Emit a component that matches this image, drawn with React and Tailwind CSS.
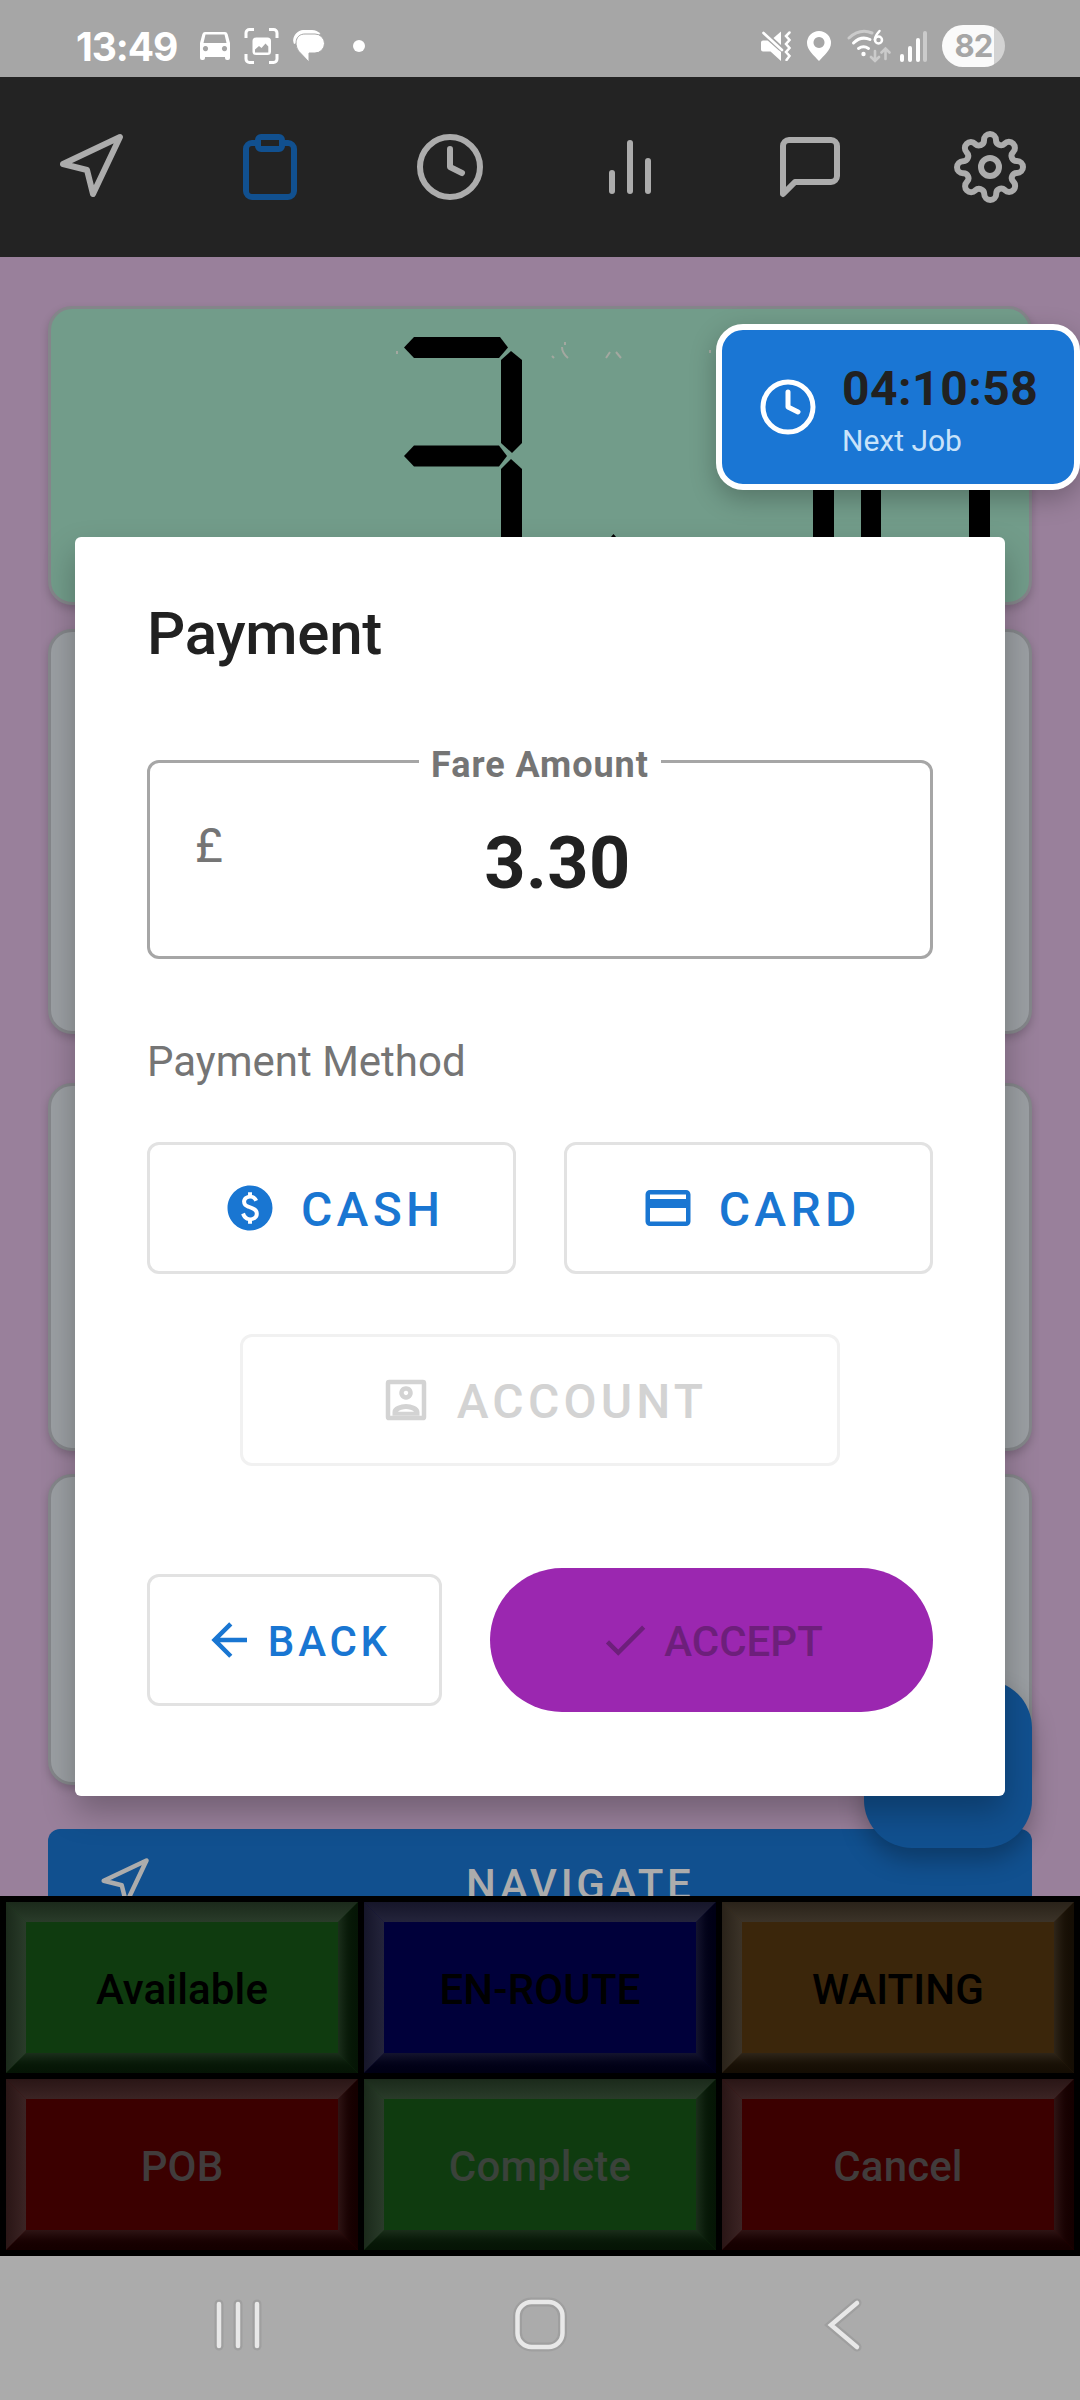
import React from "react";
import {
  FiNavigation,
  FiClipboard,
  FiClock,
  FiBarChart2,
  FiMessageSquare,
  FiSettings,
} from "react-icons/fi";
import { MdPaid, MdCreditCard } from "react-icons/md";

function StatusBar() {
  return (
    <div className="flex h-[77px] items-center bg-[#a6a6a6] pt-[15px] pr-[75px] pl-[76px] text-white">
      <span className="w-[103px] font-['Inter'] text-[39px] leading-none font-bold tracking-[-1.100px] whitespace-nowrap">
        13:49
      </span>
      <svg className="ml-[21px] h-[28px] w-[30px]" viewBox="0 0 30 28" fill="currentColor">
        <path
          fillRule="evenodd"
          d="M5 0h20q2 0 2.600 2L30 11v15q0 2-2 2h-1q-2 0-2-2v-1H5v1q0 2-2 2H2q-2 0-2-2V11L2.400 2Q3 0 5 0zM5.500 2.500L3.500 11h23l-2-8.500zM5.500 14a2.600 2.600 0 1 0 .01 0zM24.500 14a2.600 2.600 0 1 0 .01 0z"
        />
      </svg>
      <svg className="ml-[14px] h-[36px] w-[36px]" viewBox="0 0 36 36">
        <path
          d="M2 10V5a3.500 3.500 0 0 1 3.500-3.500H10M25 1.500h4.500A3.500 3.500 0 0 1 33 5v5M33 26v5a3.500 3.500 0 0 1-3.500 3.500H25M10 34.500H5.500A3.500 3.500 0 0 1 2 31v-5"
          fill="none"
          stroke="currentColor"
          strokeWidth="3"
        />
        <rect x="8.500" y="9.500" width="18.500" height="17.500" rx="3.500" fill="currentColor" />
        <path d="M11 24.500v-3l4-3.500 2.500 2 4-4.500 2.800 3v6z" fill="#a6a6a6" />
      </svg>
      <svg className="ml-[13px] h-[32px] w-[32px]" viewBox="0 0 32 32" fill="currentColor">
        <path d="M1 14C-2 7 4 .500 10 0h9q5 0 8.500 4z" />
        <path d="M12 4h10a9.500 9.500 0 0 1 0 19h-6v9L6 21.500C1 15 2 4 12 4z" stroke="#a6a6a6" strokeWidth="1" />
      </svg>
      <span className="ml-[28px] h-[12px] w-[12px] rounded-full bg-white" />

      <div className="ml-auto flex items-center">
        <svg className="h-[30px] w-[30px]" viewBox="0 0 30 30" fill="currentColor">
          <path d="M12.500 7L20 .500V14z" />
          <path d="M2 9.500h4.500l.500-.500 13 12v9L9.500 20.500H2q-2 0-2-2v-7q0-2 2-2z" />
          <path d="M2.500 2.500L20 18" stroke="#a6a6a6" strokeWidth="5" fill="none" />
          <path d="M2.500 2L21 19" stroke="currentColor" strokeWidth="2.600" fill="none" strokeLinecap="round" />
          <path
            d="M28.500 1.500l-3.500 3.500 3.500 4-3.500 4 3.500 4-3.500 4 3.500 4-3 4"
            stroke="currentColor"
            strokeWidth="2.500"
            fill="none"
            strokeLinecap="round"
          />
        </svg>
        <svg className="ml-[16px] h-[30px] w-[24px]" viewBox="0 0 24 30" fill="currentColor">
          <path
            fillRule="evenodd"
            d="M12 0a12 12 0 0 1 12 12c0 7-7 12.500-12 18C7 24.500 0 19 0 12A12 12 0 0 1 12 0zm0 6a5.500 5.500 0 1 0 .01 0z"
          />
        </svg>
        <svg className="ml-[16px] h-[34px] w-[44px]" viewBox="0 0 44 34" fill="none" strokeLinecap="round">
          <path d="M2 9Q13-1 25 4" stroke="#cbcbcb" strokeWidth="3" />
          <path d="M6.500 14Q14 6.500 23 10.500" stroke="#fff" strokeWidth="3" />
          <path d="M11.500 19.500q5-3.500 10 0" stroke="#fff" strokeWidth="3" />
          <circle cx="16.500" cy="25" r="2.200" fill="#fff" />
          <path d="M32.500 2q-4.500 5-4.700 8.500" stroke="#fff" strokeWidth="2.500" />
          <circle cx="31.500" cy="11" r="3.500" stroke="#fff" strokeWidth="2.500" />
          <path d="M28 22v10m-4-4l4 4 4-4M38.500 30V19.500m-4 4l4-4 4 4" stroke="#cbcbcb" strokeWidth="2.600" />
        </svg>
        <svg className="ml-[9px] h-[31px] w-[28px]" viewBox="0 0 28 31">
          <rect x="0" y="23" width="4" height="8" rx="2" fill="#fff" />
          <rect x="8" y="15" width="4" height="16" rx="2" fill="#fff" />
          <rect x="16" y="7" width="4" height="24" rx="2" fill="#fff" />
          <rect x="23" y="0" width="4" height="31" rx="2" fill="#cbcbcb" />
        </svg>
        <span className="ml-[14px] flex h-[42px] w-[63px] items-center justify-center rounded-full bg-[linear-gradient(90deg,#fafafa_82%,#d3d3d3_82%)] font-['Inter'] text-[31px] leading-none font-bold tracking-[-0.800px] text-[#a6a6a6]">
          <span className="mt-[-2px]">82</span>
        </span>
      </div>
    </div>
  );
}

const tabs = [
  { Icon: FiNavigation, color: "text-[#acacac]" },
  { Icon: FiClipboard, color: "text-[#11508f]" },
  { Icon: FiClock, color: "text-[#acacac]" },
  { Icon: FiBarChart2, color: "text-[#acacac]" },
  { Icon: FiMessageSquare, color: "text-[#acacac]" },
  { Icon: FiSettings, color: "text-[#acacac]" },
];

function TabBar() {
  return (
    <nav className="grid h-[180px] grid-cols-6 bg-[#232323]">
      {tabs.map(({ Icon, color }, i) => (
        <div key={i} className="flex items-center justify-center">
          <Icon className={`h-[72px] w-[72px] ${color}`} />
        </div>
      ))}
    </nav>
  );
}

function MeterDigits() {
  return (
    <svg className="block h-[293px] w-[978px]" viewBox="51 309 978 293">
      <g fill="#000">
        <path d="M404 347.500L414 337H500L508 347.500 499 358H414z" />
        <path d="M501 360L511 351 522 360V443L512 453 501 443z" />
        <path d="M404 456L414 445.500H499L507 456 499 466.500H414z" />
        <path d="M501 469L511 459 522 469V602H501z" />
        <path d="M605 544L613.500 534 622 544V560H605z" />
        <path d="M813 470h21v132h-21zM861 470h20v132h-20zM969 470h21v132h-21z" />
      </g>
      <path
        d="M397 351v3M552 356l2 2M562 347q0 6 6 11M565 342v3M606 358l4-6M616 352l5 6M710 350v3"
        stroke="#a3a8a0"
        strokeWidth="2"
        fill="none"
      />
    </svg>
  );
}

function JobScreen() {
  const panel = "rounded-[24px] border-[3px] border-[#84868a] bg-[#9b9fa3] shadow-[0_4px_8px_rgba(0,0,0,0.18)]";
  return (
    <main className="relative flex h-[1639px] flex-col overflow-hidden bg-[#99809b] px-[48px] pt-[49px]">
      <div className="h-[299px] shrink-0 overflow-hidden rounded-[24px] border-[3px] border-[#84858a] bg-[#729c8a] shadow-[0_4px_8px_rgba(0,0,0,0.18)]">
        <MeterDigits />
      </div>
      <div className={`mt-[24px] h-[405px] shrink-0 ${panel}`} />
      <div className={`mt-[49px] h-[368px] shrink-0 ${panel}`} />
      <div className={`mt-[23px] h-[311px] shrink-0 ${panel}`} />
      <div className="mt-[44px] flex h-[132px] shrink-0 items-start rounded-[12px] bg-[#11508f] pt-[27px] pl-[49px] text-[#acacac]">
        <FiNavigation className="h-[54px] w-[54px]" />
        <span className="ml-[315px] pt-[4px] text-[42px] leading-[50px] font-medium tracking-[3.750px]">
          NAVIGATE
        </span>
      </div>
      <div className="absolute top-[1423px] right-[48px] h-[168px] w-[168px] rounded-[48px] bg-[#11508f] shadow-[0_12px_24px_rgba(0,0,0,0.28)]" />
    </main>
  );
}

const statusButtons = [
  { label: "Available", bg: "bg-[#0f3b0f]", text: "text-black" },
  { label: "EN-ROUTE", bg: "bg-[#00003a]", text: "text-black" },
  { label: "WAITING", bg: "bg-[#3b260b]", text: "text-black" },
  { label: "POB", bg: "bg-[#3b0000]", text: "text-[#413c3c]" },
  { label: "Complete", bg: "bg-[#0f3b0f]", text: "text-[#3a423a]" },
  { label: "Cancel", bg: "bg-[#3b0000]", text: "text-[#413c3c]" },
];

function StatusButton({ label, bg, text }) {
  return (
    <div className={`relative flex items-center justify-center ${bg}`}>
      <i className="absolute inset-x-0 top-0 h-[20px] bg-linear-to-b from-[rgba(33,33,33,0.66)] to-[rgba(60,60,60,0.6)] [clip-path:polygon(0_0,100%_0,calc(100%-20px)_100%,20px_100%)]" />
      <i className="absolute inset-y-0 left-0 w-[20px] bg-linear-to-r from-[rgba(33,33,33,0.66)] to-[rgba(60,60,60,0.6)] [clip-path:polygon(0_0,100%_20px,100%_calc(100%-20px),0_100%)]" />
      <i className="absolute inset-y-0 right-0 w-[20px] bg-linear-to-l from-[rgba(0,0,0,0.65)] to-[rgba(36,36,36,0.56)] [clip-path:polygon(100%_0,100%_100%,0_calc(100%-20px),0_20px)]" />
      <i className="absolute inset-x-0 bottom-0 h-[20px] bg-linear-to-t from-[rgba(0,0,0,0.65)] to-[rgba(36,36,36,0.56)] [clip-path:polygon(20px_0,calc(100%-20px)_0,100%_100%,0_100%)]" />
      <span className={`pt-[4px] text-[42px] leading-none font-medium tracking-[0.150px] ${text}`}>{label}</span>
    </div>
  );
}

function StatusPad() {
  return (
    <div className="grid h-[360px] grid-cols-3 grid-rows-2 gap-[6px] bg-black p-[6px]">
      {statusButtons.map((b) => (
        <StatusButton key={b.label} {...b} />
      ))}
    </div>
  );
}

function SystemNav() {
  const shape = (
    <>
      <path d="M219 48V90M238 48V90M257 48V90" />
      <rect x="517.500" y="46" width="45" height="45" rx="14" />
      <path d="M857 47L831 69 857 91" />
    </>
  );
  return (
    <div className="h-[144px] bg-[#ababab]">
      <svg className="block h-[144px] w-[1080px]" viewBox="0 0 1080 144" fill="none" strokeLinecap="round">
        <g stroke="#9f9f9f" strokeWidth="9">{shape}</g>
        <g stroke="#e8e8e8" strokeWidth="4.500">{shape}</g>
      </svg>
    </div>
  );
}

function NextJobCard() {
  return (
    <div className="absolute top-[324px] right-0 flex h-[166px] w-[364px] items-center rounded-[27px] border-[6px] border-white bg-[#1a76d4] pl-[36px] shadow-[0_9px_26px_rgba(0,0,0,0.25)]">
      <FiClock className="h-[60px] w-[60px] text-white" />
      <div className="ml-[24px]">
        <div className="pt-[7px] text-[48px] leading-[56px] font-bold tracking-[0.500px] whitespace-nowrap text-[#212121]">
          04:10:58
        </div>
        <div className="mt-[4px] text-[30px] leading-[40px] text-[#c9e3fa]">Next Job</div>
      </div>
    </div>
  );
}

function AccountBoxIcon() {
  return (
    <svg className="h-[54px] w-[54px]" viewBox="0 0 24 24" fill="currentColor" fillRule="evenodd">
      <path d="M4.500 3h15A1.500 1.500 0 0 1 21 4.500v15a1.500 1.500 0 0 1-1.500 1.500h-15A1.500 1.500 0 0 1 3 19.500v-15A1.500 1.500 0 0 1 4.500 3zM5 5v14h14V5z" />
      <path d="M12 5.850a3 3 0 1 0 .01 0zM12 7.850a1 1 0 1 1-.01 0z" />
      <path d="M6 19v-1.700c0-2.300 3.600-3.500 6-3.500s6 1.200 6 3.500V19zM8.400 17.250h7.200c-.800-.750-2.300-1.200-3.600-1.200s-2.800.450-3.600 1.200z" />
    </svg>
  );
}

function PaymentDialog() {
  return (
    <div className="absolute top-[537px] left-[75px] flex h-[1259px] w-[930px] flex-col rounded-[6px] bg-white px-[72px] pt-[61px] shadow-[0_16px_32px_rgba(0,0,0,0.26)]">
      <h2 className="text-[60px] leading-[72px] font-medium tracking-[-0.300px] text-[#212121]">Payment</h2>

      <div className="relative mt-[90px] h-[199px] rounded-[12px] border-[3px] border-[#a6a6a6]">
        <span className="absolute top-[-22px] left-[269px] flex w-[242px] justify-center bg-white text-[36px] leading-[48px] font-bold tracking-[0.950px] whitespace-nowrap text-[#757575]">
          Fare Amount
        </span>
        <div className="flex items-start pl-[45px]">
          <span className="w-[60px] pt-[53px] text-[48px] leading-[60px] text-[#757575]">£</span>
          <span className="flex-1 pt-[59px] pr-[70px] text-center text-[72px] leading-[84px] font-bold tracking-[0.400px] text-[#212121]">
            3.30
          </span>
        </div>
      </div>

      <h3 className="mt-[73px] text-[42px] leading-[60px] text-[#757575]">Payment Method</h3>

      <div className="mt-[50px] grid grid-cols-2 gap-[48px] text-[48px] leading-none font-medium tracking-[4.300px] text-[#1976d2]">
        <div className="flex h-[132px] items-center justify-center gap-[24px] rounded-[12px] border-[3px] border-[#e2e2e2]">
          <MdPaid className="h-[54px] w-[54px]" />
          <span className="mr-[-4.300px] pt-[3px]">CASH</span>
        </div>
        <div className="flex h-[132px] items-center justify-center gap-[24px] rounded-[12px] border-[3px] border-[#e2e2e2]">
          <MdCreditCard className="h-[54px] w-[54px]" />
          <span className="mr-[-4.300px] pt-[3px]">CARD</span>
        </div>
      </div>
      <div className="mt-[60px] flex h-[132px] w-[600px] items-center justify-center gap-[24px] self-center rounded-[12px] border-[3px] border-[#f1f1f1] text-[48px] leading-none font-medium tracking-[4.200px] text-[#d3d3d3]">
        <AccountBoxIcon />
        <span className="mr-[-6px] pt-[3px]">ACCOUNT</span>
      </div>

      <div className="mt-[102px] flex items-center gap-[48px] text-[42px] leading-none font-medium">
        <div className="flex h-[132px] w-[295px] items-center justify-center gap-[12px] rounded-[12px] border-[3px] border-[#e2e2e2] tracking-[3.750px] text-[#1976d2]">
          <svg className="h-[54px] w-[54px]" viewBox="0 0 24 24" fill="currentColor">
            <path d="M20 11v2H8l5.500 5.500-1.420 1.420L4.160 12l7.920-7.920L13.500 5.500 8 11h12z" />
          </svg>
          <span className="mr-[-3.750px] pt-[3px]">BACK</span>
        </div>
        <div className="flex h-[144px] flex-1 items-center justify-center gap-[12px] rounded-full bg-[#9b27b0] pr-[2px] text-[#6d1f7b]">
          <svg className="h-[54px] w-[54px]" viewBox="0 0 24 24" fill="currentColor">
            <path d="M21 7L9 19l-5.500-5.500 1.410-1.410L9 16.170 19.590 5.590 21 7z" />
          </svg>
          <span className="pt-[3px]">ACCEPT</span>
        </div>
      </div>
    </div>
  );
}

export default function App() {
  return (
    <div className="relative h-[2400px] w-[1080px] overflow-hidden font-['Roboto',sans-serif]">
      <StatusBar />
      <TabBar />
      <JobScreen />
      <StatusPad />
      <SystemNav />
      <PaymentDialog />
      <NextJobCard />
    </div>
  );
}
